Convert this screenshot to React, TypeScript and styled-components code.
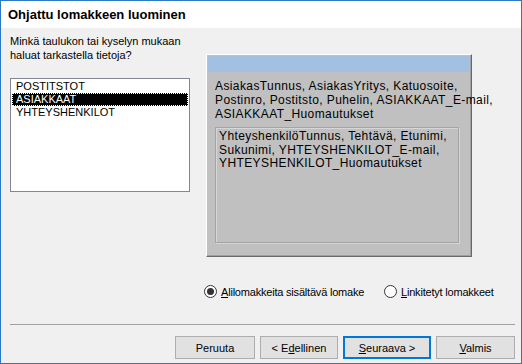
import React, { useState } from 'react'
import styled, { createGlobalStyle } from 'styled-components'

const GlobalStyle = createGlobalStyle`
  html, body {
    margin: 0;
    padding: 0;
    background: #f0f0f0;
  }
  * {
    box-sizing: border-box;
  }
`

type Sized = {
  w: number
}

type Focus = {
  focused?: boolean
}

type Selected = {
  selected?: boolean
}

const Window = styled.div`
  width: 522px;
  height: 364px;
  display: flex;
  flex-direction: column;
  background: #f0f0f0;
  border: 1px solid #2b78c5;
  font-family: 'Liberation Sans', Arial, sans-serif;
  font-size: 12px;
  color: #000;
  overflow: hidden;
`
const Header = styled.div`
  height: 27px;
  background: #ffffff;
  padding: 5px 0 0 7px;
`
const Title = styled.h1`
  margin: 0;
  font-size: 13px;
  font-weight: bold;
  line-height: 17px;
`
const Body = styled.div`
  display: flex;
  padding: 6px 0 0 9px;
  height: 229px;
`
const LeftColumn = styled.div`
  width: 180px;
  display: flex;
  flex-direction: column;
`
const Prompt = styled.p`
  margin: 0;
  font-size: 11px;
  line-height: 14px;
  height: 44px;
  white-space: nowrap;
`
const ListBox = styled.ul`
  list-style: none;
  margin: 0;
  padding: 1px 1px;
  height: 114px;
  background: #ffffff;
  border: 1px solid #828790;
  font-size: 11px;
`
const ListItem = styled.li<Selected>`
  height: 13px;
  line-height: 13px;
  padding-left: 4px;
  background: ${(props) => (props.selected ? '#000000' : 'transparent')};
  color: ${(props) => (props.selected ? '#ffffff' : '#000000')};
  outline: ${(props) => (props.selected ? '1px dotted #ffffff' : 'none')};
  outline-offset: -1px;
`
const Panel = styled.div`
  margin: 20px 0 0 16px;
  width: 266px;
  height: 203px;
  background: #c0c0c0;
  border-top: 1px solid #ffffff;
  border-left: 1px solid #ffffff;
  border-right: 1px solid #696969;
  border-bottom: 1px solid #696969;
  box-shadow: inset -1px -1px 0 #a0a0a0;
  padding: 1px 2px 0 1px;
  display: flex;
  flex-direction: column;
  letter-spacing: 0.4px;
`
const Band = styled.div`
  height: 16px;
  background: #a2c0e2;
`
const FieldText = styled.div`
  padding: 7px 0 0 7px;
  line-height: 14px;
  height: 55px;
  white-space: nowrap;
`
const SubForm = styled.div`
  margin: 0 10px 0 7px;
  height: 116px;
  border: 1px solid #a4a4a4;
  box-shadow: inset 1px 1px 0 #d6d6d6, 1px 1px 0 #d6d6d6;
  padding: 2px 3px 0 3px;
  line-height: 13.5px;
  white-space: nowrap;
`
const Options = styled.div`
  display: flex;
  align-items: center;
  margin-top: 28px;
  padding-left: 203px;
  height: 13px;
  font-size: 11px;
  letter-spacing: -0.2px;
`
const RadioLabel = styled.label<Sized>`
  display: flex;
  align-items: center;
  gap: 4px;
  width: ${(props) => props.w}px;
  cursor: default;
  white-space: nowrap;
`
const RadioCircle = styled.span<Selected>`
  flex: none;
  width: 13px;
  height: 13px;
  border-radius: 50%;
  border: 1px solid #333333;
  background: #ffffff;
  display: flex;
  align-items: center;
  justify-content: center;
  &::after {
    content: '';
    width: 7px;
    height: 7px;
    border-radius: 50%;
    background: #333333;
    display: ${(props) => (props.selected ? 'block' : 'none')};
  }
`
const Key = styled.span`
  text-decoration: underline;
`
const Separator = styled.hr`
  margin: 26px 6px 0 9px;
  border: none;
  border-top: 1px solid #a0a0a0;
  height: 0;
`
const Footer = styled.div`
  display: flex;
  justify-content: flex-end;
  gap: 5px;
  padding: 11px 6px 0 0;
`
const Button = styled.button<Sized & Focus>`
  width: ${(props) => props.w}px;
  height: 23px;
  background: #e1e1e1;
  border: ${(props) => (props.focused ? '2px solid #0078d7' : '1px solid #adadad')};
  font-family: inherit;
  font-size: 11px;
  color: #000;
  padding: 0;
`

const fieldLines = [
  'AsiakasTunnus, AsiakasYritys, Katuosoite,',
  'Postinro, Postitsto, Puhelin, ASIAKKAAT_E-mail,',
  'ASIAKKAAT_Huomautukset'
]
const subFieldLines = [
  'YhteyshenkilöTunnus, Tehtävä, Etunimi,',
  'Sukunimi, YHTEYSHENKILOT_E-mail,',
  'YHTEYSHENKILOT_Huomautukset'
]

function App() {
  const [table, setTable] = useState('ASIAKKAAT')
  const [layout, setLayout] = useState('sub')

  return (
    <>
      <GlobalStyle />
      <Window>
        <Header>
          <Title>Ohjattu lomakkeen luominen</Title>
        </Header>
        <Body>
          <LeftColumn>
            <Prompt>
              Minkä taulukon tai kyselyn mukaan
              <br />
              haluat tarkastella tietoja?
            </Prompt>
            <ListBox>
              {['POSTITSTOT', 'ASIAKKAAT', 'YHTEYSHENKILOT'].map((name) => (
                <ListItem
                  key={name}
                  selected={table === name}
                  onClick={() => setTable(name)}
                >
                  {name}
                </ListItem>
              ))}
            </ListBox>
          </LeftColumn>
          <Panel>
            <Band />
            <FieldText>
              {fieldLines.map((line) => (
                <div key={line}>{line}</div>
              ))}
            </FieldText>
            <SubForm>
              {subFieldLines.map((line) => (
                <div key={line}>{line}</div>
              ))}
            </SubForm>
          </Panel>
        </Body>
        <Options>
          <RadioLabel w={180} onClick={() => setLayout('sub')}>
            <RadioCircle selected={layout === 'sub'} />
            <span>
              <Key>A</Key>lilomakkeita sisältävä lomake
            </span>
          </RadioLabel>
          <RadioLabel w={130} onClick={() => setLayout('linked')}>
            <RadioCircle selected={layout === 'linked'} />
            <span>
              <Key>L</Key>inkitetyt lomakkeet
            </span>
          </RadioLabel>
        </Options>
        <Separator />
        <Footer>
          <Button w={80}>Peruuta</Button>
          <Button w={78}>
            &lt; E<Key>d</Key>ellinen
          </Button>
          <Button w={88} focused>
            <Key>S</Key>euraava &gt;
          </Button>
          <Button w={79}>
            <Key>V</Key>almis
          </Button>
        </Footer>
      </Window>
    </>
  )
}

export default App
